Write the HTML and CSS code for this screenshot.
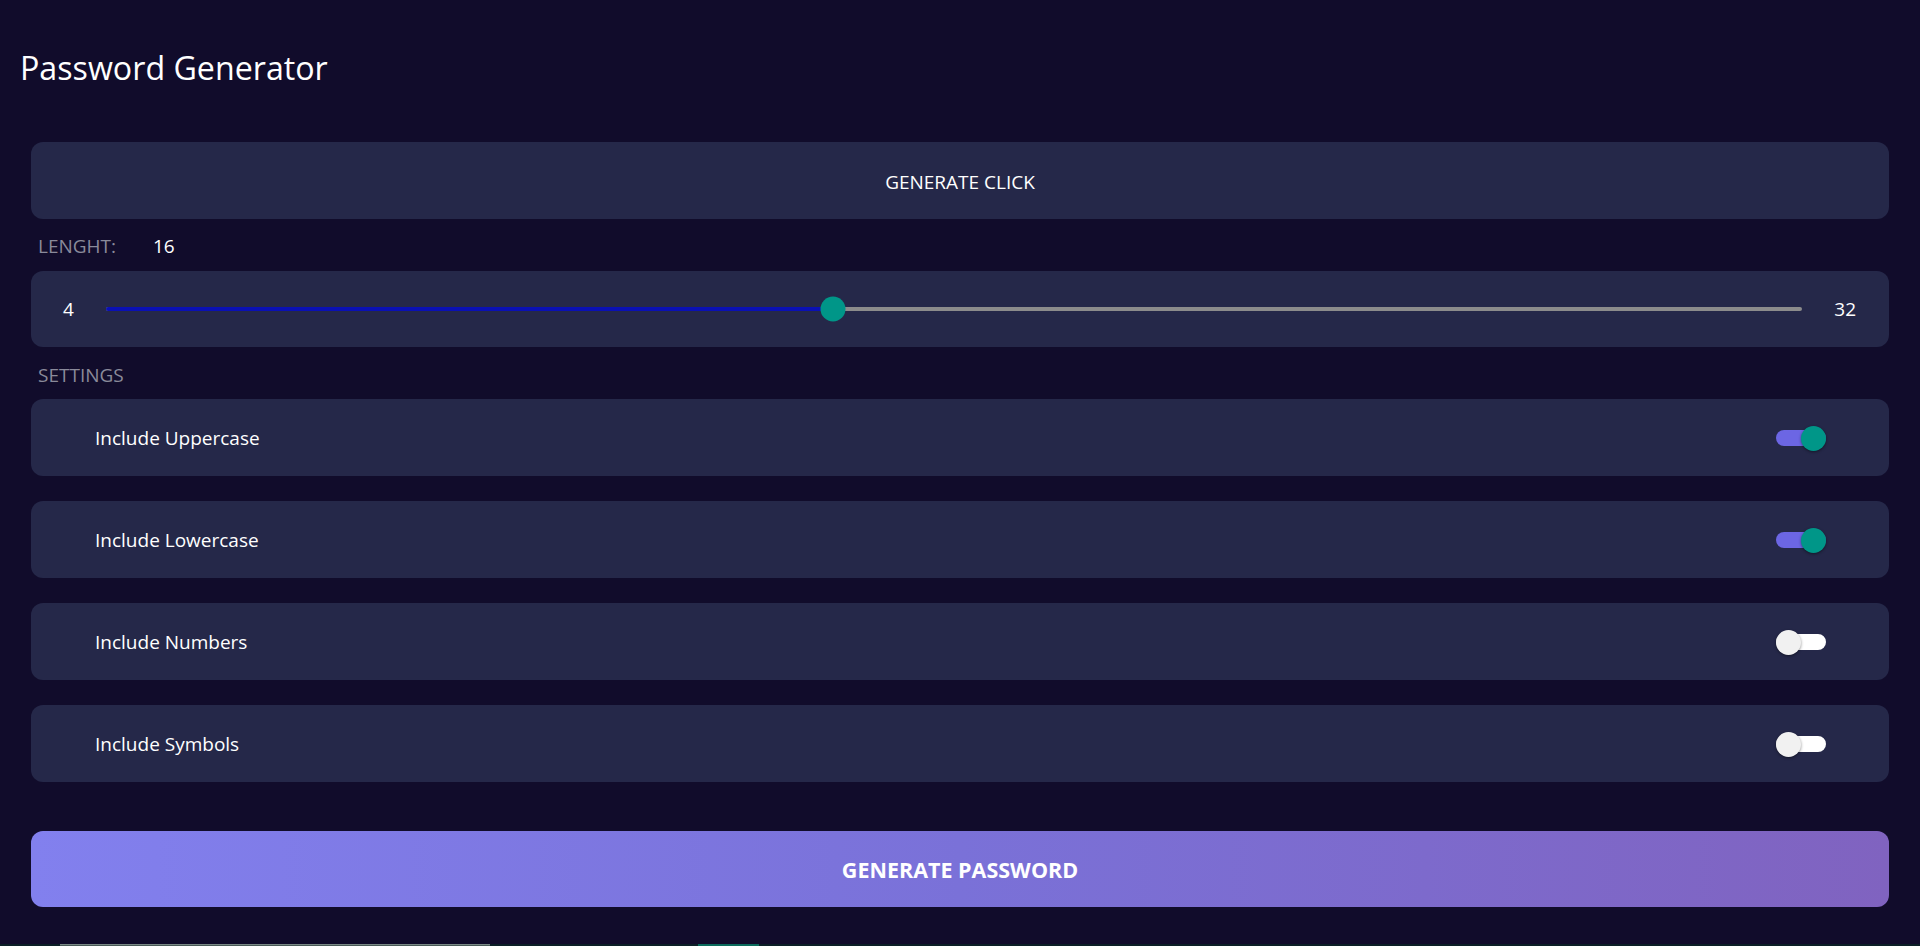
FILE: index.html
```html
<!DOCTYPE html>
<html lang="en">
<head>
<meta charset="utf-8">
<title>Password Generator</title>
<link rel="stylesheet" href="styles.css">
</head>
<body>
<header class="header">
  <h1 class="title">Password Generator</h1>
</header>
<main class="main">
  <div class="card card-click">GENERATE CLICK</div>

  <div class="label-row">
    <span class="label">LENGHT:</span>
    <span class="value">16</span>
  </div>

  <div class="card card-slider">
    <span class="range-end">4</span>
    <div class="track">
      <div class="track-fill" style="width: 42.857%"></div>
      <div class="thumb" style="left: 42.857%"></div>
    </div>
    <span class="range-end">32</span>
  </div>

  <div class="label-row label-row-settings">
    <span class="label">SETTINGS</span>
  </div>

  <div class="settings">
    <div class="card card-setting">
      <span class="setting-name">Include Uppercase</span>
      <span class="switch is-on"><span class="switch-thumb"></span></span>
    </div>
    <div class="card card-setting">
      <span class="setting-name">Include Lowercase</span>
      <span class="switch is-on"><span class="switch-thumb"></span></span>
    </div>
    <div class="card card-setting">
      <span class="setting-name">Include Numbers</span>
      <span class="switch"><span class="switch-thumb"></span></span>
    </div>
    <div class="card card-setting">
      <span class="setting-name">Include Symbols</span>
      <span class="switch"><span class="switch-thumb"></span></span>
    </div>
  </div>

  <button class="generate-btn">GENERATE PASSWORD</button>
</main>
<section class="result">
  <div class="result-field"></div>
  <div class="result-copy"></div>
</section>
</body>
</html>
```

FILE: styles.css
```css
* { box-sizing: border-box; }

html, body {
  margin: 0;
  padding: 0;
  background: #110c2b;
  color: #ffffff;
  font-family: "Open Sans", "Noto Sans", sans-serif;
}

.header {
  padding: 46px 0 0 20px;
}

.title {
  margin: 0;
  font-size: 32.2px;
  font-weight: 400;
  line-height: 44px;
  color: #ffffff;
}

.main {
  padding: 52px 31px 0 31px;
  display: flex;
  flex-direction: column;
}

.card {
  background: #252849;
  border-radius: 12px;
}

.card-click {
  height: 77px;
  display: flex;
  align-items: center;
  justify-content: center;
  font-size: 19px;
  padding-top: 3px;
  color: #ffffff;
}

.label-row {
  display: flex;
  align-items: center;
  height: 24px;
  margin: 14px 0 14px 0;
  padding: 1px 0 0 7px;
  font-size: 19px;
  line-height: 24px;
}

.label-row-settings {
  margin: 15px 0 13px 0;
}

.label {
  color: #8a8a9a;
  width: 115px;
}

.value {
  color: #ffffff;
}

.card-slider {
  height: 76px;
  display: flex;
  align-items: center;
  padding: 0 33px 0 32px;
  font-size: 19px;
}

.range-end {
  color: #ffffff;
}

.track {
  position: relative;
  flex: 1;
  height: 4px;
  margin: 0 32px;
  background: #8c8c8c;
  border-radius: 2px;
}

.track-fill {
  height: 100%;
  background: #0a10b4;
  border-radius: 2px;
}

.thumb {
  position: absolute;
  top: 50%;
  width: 25px;
  height: 25px;
  border-radius: 50%;
  background: #009688;
  transform: translate(-50%, -50%);
}

.settings {
  display: flex;
  flex-direction: column;
  gap: 25px;
}

.card-setting {
  height: 77px;
  display: flex;
  align-items: center;
  justify-content: space-between;
  padding: 1px 63px 0 64px;
}

.setting-name {
  font-size: 19px;
  color: #ffffff;
}

.switch {
  position: relative;
  display: flex;
  align-items: center;
  width: 50px;
  height: 25px;
}

.switch::before {
  content: "";
  display: block;
  width: 50px;
  height: 16px;
  border-radius: 8px;
  background: #ffffff;
}

.switch.is-on::before {
  background: #6c66e4;
}

.switch-thumb {
  position: absolute;
  left: 0;
  top: 0;
  width: 25px;
  height: 25px;
  border-radius: 50%;
  background: #f1f1f1;
  box-shadow: 0 1px 3px rgba(0, 0, 0, 0.45);
}

.switch.is-on .switch-thumb {
  left: 25px;
  background: #009688;
}

.generate-btn {
  margin-top: 49px;
  height: 76px;
  border: 0;
  border-radius: 12px;
  background: linear-gradient(to right, #8280ee, #7a71d8 50%, #8063c0);
  color: #ffffff;
  font-family: inherit;
  font-size: 21.5px;
  font-weight: 700;
  padding-top: 2px;
}

.result {
  margin-top: 37px;
  background: #0c1f27;
  height: 60px;
  display: flex;
  padding-left: 60px;
}

.result-field {
  width: 430px;
  height: 50px;
  border-top: 1px solid #7a8a86;
  background: #4a5a58;
}

.result-copy {
  width: 61px;
  height: 50px;
  margin-left: 208px;
  background: #0b6b5c;
}
```
